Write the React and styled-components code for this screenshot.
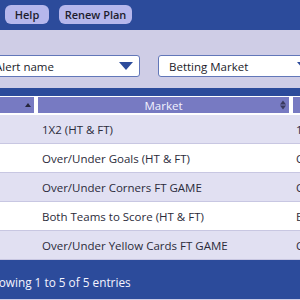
import React from 'react';
import styled, { createGlobalStyle } from 'styled-components';

const Global = createGlobalStyle`
  html, body { margin: 0; padding: 0; }
  body {
    font-family: "Open Sans", "Liberation Sans", sans-serif;
    background: #cfcde6;
    overflow: hidden;
  }
`;

const Page = styled.div`
  width: 300px;
  height: 300px;
  overflow: hidden;
  background: #cfcde6;
`;

const TopBar = styled.div`
  height: 30px;
  background: #2c4b9b;
  display: flex;
  align-items: flex-start;
  gap: 10px;
  padding: 5px 0 0 5px;
  box-sizing: border-box;
`;

const Button = styled.button`
  height: 19px;
  width: ${(p) => p.w}px;
  border: none;
  border-radius: 6px;
  background: #b6b7ec;
  color: #1d1d2e;
  font-family: inherit;
  font-size: 11px;
  font-weight: 600;
  padding: 0;
`;

const Filters = styled.div`
  height: 58px;
  display: flex;
  align-items: flex-start;
  gap: 18px;
  padding-top: 25px;
  margin-left: -16px;
  box-sizing: border-box;
`;

const Select = styled.div`
  flex: none;
  width: ${(p) => p.w}px;
  height: 22px;
  box-sizing: border-box;
  background: #fff;
  border: 1px solid #6277b9;
  border-radius: 3px;
  display: flex;
  align-items: center;
  justify-content: space-between;
  padding: 0 6px 0 10px;
  font-size: 11.5px;
  font-weight: 500;
  color: #1b1b2a;
`;

const Caret = styled.span`
  width: 0;
  height: 0;
  border-left: 7px solid transparent;
  border-right: 7px solid transparent;
  border-top: 8px solid #2c4b9b;
`;

const Band = styled.div`
  height: 8px;
  background: #2c4b9b;
`;

const Table = styled.div`
  background: #fff;
`;

const HeadRow = styled.div`
  display: grid;
  grid-template-columns: 34px 251px 40px;
  column-gap: 4px;
  padding: 1px 0 2px;
  background: #fff;
`;

const HeadCell = styled.div`
  position: relative;
  height: 16px;
  background: #777ac2;
  color: #f2f2ff;
  font-size: 11.5px;
  display: flex;
  align-items: center;
  justify-content: center;
`;

const SortIcon = styled.span`
  position: absolute;
  right: ${(p) => p.r}px;
  top: 50%;
  transform: translateY(-50%);
  display: flex;
  flex-direction: column;
  gap: 1px;
`;

const Tri = styled.span`
  width: 0;
  height: 0;
  border-left: ${(p) => p.s}px solid transparent;
  border-right: ${(p) => p.s}px solid transparent;
  ${(p) =>
    p.down
      ? `border-top: ${p.s + 1}px solid #26263c;`
      : `border-bottom: ${p.s + 1}px solid #26263c;`}
  opacity: ${(p) => (p.dim ? 0.75 : 1)};
`;

const Row = styled.div`
  display: grid;
  grid-template-columns: 34px 251px 40px;
  column-gap: 4px;
  height: 28px;
  align-items: center;
  background: ${(p) => (p.alt ? '#fff' : '#e1e0f2')};
  border-bottom: 1px solid #c8c7e2;
  font-size: 11.5px;
  color: #2b2b3a;
`;

const Cell = styled.div`
  padding-left: ${(p) => p.pad || 0}px;
  white-space: nowrap;
  overflow: hidden;
`;

const Footer = styled.div`
  height: 39px;
  background: #2c4b9b;
  color: #f4f4ff;
  font-size: 11.8px;
  display: flex;
  align-items: center;
  padding-top: 5px;
  box-sizing: border-box;
  margin-left: -15px;
`;

const rows = [
  ['1X2 (HT & FT)', '1X2'],
  ['Over/Under Goals (HT & FT)', 'Over'],
  ['Over/Under Corners FT GAME', 'Over'],
  ['Both Teams to Score (HT & FT)', 'Both'],
  ['Over/Under Yellow Cards FT GAME', 'Over'],
];

export default function App() {
  return (
    <Page>
      <Global />
      <TopBar>
        <Button w={44}>Help</Button>
        <Button w={73}>Renew Plan</Button>
      </TopBar>
      <Filters>
        <Select w={156}>
          <span>Alert name</span>
          <Caret />
        </Select>
        <Select w={160}>
          <span>Betting Market</span>
          <Caret />
        </Select>
      </Filters>
      <Band />
      <Table>
        <HeadRow>
          <HeadCell>
            <SortIcon r={3}>
              <Tri s={3} />
            </SortIcon>
          </HeadCell>
          <HeadCell>
            Market
            <SortIcon r={3}>
              <Tri s={3} dim />
              <Tri s={3} down dim />
            </SortIcon>
          </HeadCell>
          <HeadCell />
        </HeadRow>
        {rows.map((r, i) => (
          <Row key={i} alt={i % 2 === 1}>
            <Cell />
            <Cell pad={4}>{r[0]}</Cell>
            <Cell pad={3}>{r[1]}</Cell>
          </Row>
        ))}
      </Table>
      <Footer>Showing 1 to 5 of 5 entries</Footer>
    </Page>
  );
}
